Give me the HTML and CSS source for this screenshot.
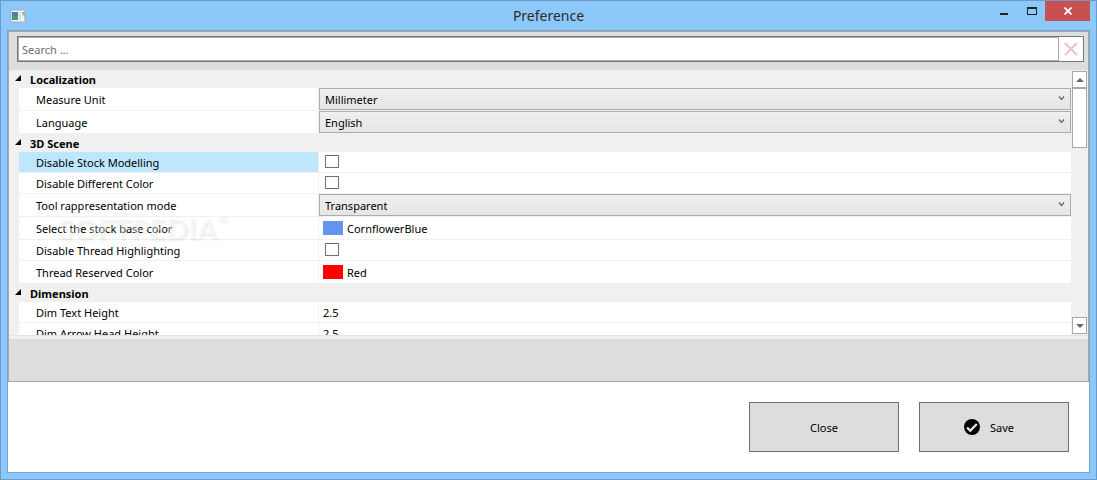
FILE: index.html
```html
<!DOCTYPE html>
<html lang="en">

<head>
  <meta charset="UTF-8" />
  <meta name="viewport" content="width=device-width, initial-scale=1.0" />
  <title>Preference</title>
  <link rel="stylesheet" href="styles.css">
</head>

<body>
  <div class="window">
    <header class="titlebar">
      <svg class="app-icon" width="17" height="14" viewBox="0 0 17 14">
        <rect x="1" y="1" width="14" height="12" fill="#f4f4f4" stroke="#a9adb0" />
        <rect x="2" y="3" width="6" height="8" fill="#4a9a80" />
        <rect x="2" y="3" width="6" height="4" fill="#4a7fa8" />
        <rect x="9" y="3" width="2" height="8" fill="#dcdcdc" />
        <path d="M12 3h3v5l-3-3z" fill="#8fbcae" />
      </svg>
      <h1 class="title">Preference</h1>
      <div class="window-buttons">
        <button class="win-btn" aria-label="Minimize">
          <svg width="9" height="12" viewBox="0 0 9 12"><path d="M0 8h8v2H0z" fill="#222" /></svg>
        </button>
        <button class="win-btn" aria-label="Maximize">
          <svg width="10" height="8" viewBox="0 0 10 8"><path d="M0 0h10v8H0zM1 2v5h8V2z" fill="#222" fill-rule="evenodd" /></svg>
        </button>
        <button class="win-btn win-close" aria-label="Close window">
          <svg width="8" height="8" viewBox="0 0 8 8"><path d="M.5.5l7 7M7.500.5l-7 7" stroke="#fff" stroke-width="1.800" /></svg>
        </button>
      </div>
    </header>

    <main class="client">
      <section class="panel">
        <div class="search">
          <input class="search-input" type="text" placeholder="Search ..." aria-label="Search">
          <button class="search-clear" aria-label="Clear search">
            <svg width="14" height="14" viewBox="0 0 14 14"><path d="M1 1l12 12M13 1L1 13" stroke="#f0c4c4" stroke-width="2.200" /></svg>
          </button>
        </div>

        <div class="grid">
          <div class="rows">
            <h2 class="category"><svg width="6" height="6" viewBox="0 0 6 6"><path d="M6 0v6H0z" /></svg>Localization</h2>
            <div class="row tall">
              <label class="name" for="unit">Measure Unit</label>
              <div class="value combo">
                <select id="unit"><option>Millimeter</option><option>Inch</option></select>
                <svg width="7" height="5" viewBox="0 0 7 5"><path d="M1 .5l2.500 3L6 .5" /></svg>
              </div>
            </div>
            <div class="row tall">
              <label class="name" for="language">Language</label>
              <div class="value combo">
                <select id="language"><option>English</option><option>Italiano</option></select>
                <svg width="7" height="5" viewBox="0 0 7 5"><path d="M1 .5l2.500 3L6 .5" /></svg>
              </div>
            </div>

            <h2 class="category"><svg width="6" height="6" viewBox="0 0 6 6"><path d="M6 0v6H0z" /></svg>3D Scene</h2>
            <div class="row">
              <label class="name selected" for="stock-modelling">Disable Stock Modelling</label>
              <div class="value"><input type="checkbox" id="stock-modelling"></div>
            </div>
            <div class="row">
              <label class="name" for="different-color">Disable Different Color</label>
              <div class="value"><input type="checkbox" id="different-color"></div>
            </div>
            <div class="row tall">
              <label class="name" for="tool-mode">Tool rappresentation mode</label>
              <div class="value combo">
                <select id="tool-mode"><option>Transparent</option><option>Solid</option></select>
                <svg width="7" height="5" viewBox="0 0 7 5"><path d="M1 .5l2.500 3L6 .5" /></svg>
              </div>
            </div>
            <div class="row tall marked">
              <label class="name" for="stock-color">Select the stock base color</label>
              <div class="value"><button class="color" id="stock-color"><span class="swatch blue"></span>CornflowerBlue</button></div>
              <span class="watermark" aria-hidden="true">SOFTPEDIA<span class="reg">®</span></span>
            </div>
            <div class="row">
              <label class="name" for="thread-highlight">Disable Thread Highlighting</label>
              <div class="value"><input type="checkbox" id="thread-highlight"></div>
            </div>
            <div class="row tall">
              <label class="name" for="thread-color">Thread Reserved Color</label>
              <div class="value"><button class="color" id="thread-color"><span class="swatch red"></span>Red</button></div>
            </div>

            <h2 class="category"><svg width="6" height="6" viewBox="0 0 6 6"><path d="M6 0v6H0z" /></svg>Dimension</h2>
            <div class="row">
              <label class="name" for="text-height">Dim Text Height</label>
              <div class="value"><input type="text" id="text-height" value="2.5"></div>
            </div>
            <div class="row">
              <label class="name" for="arrow-height">Dim Arrow Head Height</label>
              <div class="value"><input type="text" id="arrow-height" value="2.5"></div>
            </div>
          </div>
          <div class="scrollbar">
            <button class="scroll-btn" aria-label="Scroll up">
              <svg width="8" height="4" viewBox="0 0 8 4"><path d="M4 0l4 4H0z" /></svg>
            </button>
            <div class="thumb"></div>
            <button class="scroll-btn scroll-down" aria-label="Scroll down">
              <svg width="8" height="4" viewBox="0 0 8 4"><path d="M0 0h8L4 4z" /></svg>
            </button>
          </div>
        </div>

        <div class="description"></div>
      </section>

      <footer class="actions">
        <button class="btn">Close</button>
        <button class="btn btn-save">
          <svg width="16" height="16" viewBox="0 0 16 16">
            <circle cx="8" cy="8" r="8" fill="#000" />
            <path d="M3 8.500l3.300 3.200L12.800 5" fill="none" stroke="#ddd" stroke-width="2.400" />
          </svg>
          Save
        </button>
      </footer>
    </main>
  </div>
</body>

</html>
```

FILE: styles.css
```css
* {
  box-sizing: border-box;
}

body {
  margin: 0;
  font-family: "Noto Sans", "Open Sans", sans-serif;
  font-size: 11px;
  color: #000;
}

button,
input,
select {
  font: inherit;
  color: inherit;
  margin: 0;
  padding: 0;
  border: none;
  border-radius: 0;
  background: none;
  appearance: none;
}

.window {
  height: 100vh;
  display: flex;
  flex-direction: column;
  padding: 0 6px 6px;
  border: 1px solid #6d9bc7;
  background: #8dc8fb;
}

/* title bar */
.titlebar {
  flex: none;
  height: 29px;
  display: grid;
  grid-template-columns: 1fr auto 1fr;
  align-items: center;
}

.app-icon {
  margin-left: 3px;
}

.title {
  margin: 0;
  font-size: 14px;
  font-weight: 400;
  line-height: 28px;
  color: #2b2b2b;
}

.window-buttons {
  align-self: start;
  justify-self: end;
  display: flex;
}

.win-btn {
  width: 27px;
  height: 20px;
  display: flex;
  align-items: center;
  justify-content: center;
}

.win-close {
  width: 45px;
  background: #c75050;
}

/* client area */
.client {
  flex: 1;
  min-height: 0;
  display: flex;
  flex-direction: column;
  border: 1px solid #76a5d1;
  background: #fff;
}

.panel {
  flex: 1;
  min-height: 0;
  display: flex;
  flex-direction: column;
  border: 1px solid #a8a8a8;
  background: #ddd;
}

.search {
  flex: none;
  height: 26px;
  margin: 4px 4px 8px 8px;
  display: flex;
  border: 1px solid #777;
  background: #fff;
}

.search-input {
  flex: 1;
  padding: 0 3px;
  border: 1px solid #abadb3;
}

.search-input::placeholder {
  color: #6d6d6d;
}

.search-clear {
  width: 24px;
  display: flex;
  align-items: center;
  justify-content: center;
}

/* property grid */
.grid {
  flex: 1;
  min-height: 0;
  display: flex;
  background: #f0f0f0;
  border-bottom: 1px solid #e3e3e3;
}

.rows {
  flex: 1;
  overflow: hidden;
}

.category {
  height: 18px;
  margin: 0;
  padding-left: 6px;
  display: flex;
  gap: 9px;
  font-size: 11px;
  font-weight: 700;
  line-height: 20px;
}

.category svg {
  margin-top: 5px;
}

.row {
  height: 21px;
  margin-left: 10px;
  display: flex;
  border-bottom: 1px solid #f0f0f0;
  background: #fff;
}

.tall {
  height: 23px;
}

.name {
  width: 300px;
  padding-left: 17px;
  display: flex;
  align-items: center;
  border-right: 1px solid #f0f0f0;
}

.selected {
  background: #bee6fd;
}

.value {
  flex: 1;
  padding-left: 4px;
  display: flex;
  align-items: center;
}

.value input[type="text"] {
  flex: 1;
}

.value input[type="checkbox"] {
  width: 14px;
  height: 13px;
  margin: 0 0 2px 2px;
  border: 1px solid #707070;
  background: #fff;
}

.value input[type="checkbox"]:checked {
  background: #707070;
}

.combo {
  padding: 0;
  display: grid;
  align-items: stretch;
}

.combo select,
.combo svg {
  grid-area: 1 / 1;
}

.combo select {
  padding-left: 5px;
  border: 1px solid #acacac;
  background: linear-gradient(#f0f0f0, #e5e5e5);
}

.combo svg {
  justify-self: end;
  align-self: center;
  margin: 0 6px 1px 0;
  fill: none;
  stroke: #666;
  stroke-width: 1.2;
  pointer-events: none;
}

.color {
  display: flex;
  align-items: center;
  gap: 4px;
}

.swatch {
  width: 20px;
  height: 14px;
}

.blue {
  background: #6495ed;
}

.red {
  background: #f00;
}

/* watermark lies over the rows */
.marked {
  position: relative;
}

.watermark {
  position: absolute;
  left: 39px;
  top: -1px;
  display: flex;
  font-family: Lato, sans-serif;
  font-size: 29px;
  font-weight: 900;
  line-height: 24px;
  color: rgba(255, 255, 255, 0.4);
  text-shadow: 1px 2px 2px rgba(0, 0, 0, 0.07);
  pointer-events: none;
}

.reg {
  font-size: 12px;
  line-height: 6px;
}

/* scroll bar */
.scrollbar {
  width: 17px;
  padding: 1px;
  display: flex;
  flex-direction: column;
}

.scroll-btn {
  height: 17px;
  display: flex;
  align-items: center;
  justify-content: center;
  border: 1px solid #a8a8a8;
  background: #fff;
}

.scroll-btn svg {
  fill: #666;
}

.scroll-down {
  margin-top: auto;
}

.thumb {
  height: 60px;
  border: 1px solid #a8a8a8;
  background: #fff;
}

.description {
  flex: none;
  height: 45px;
  border-top: 3px solid #f0f0f0;
}

/* bottom buttons */
.actions {
  flex: none;
  padding: 20px;
  display: flex;
  justify-content: flex-end;
  gap: 20px;
}

.btn {
  width: 150px;
  height: 50px;
  display: flex;
  align-items: center;
  justify-content: center;
  gap: 10px;
  border: 1px solid #707070;
  background: #ddd;
}

.btn-save {
  padding-right: 10px;
}
```
